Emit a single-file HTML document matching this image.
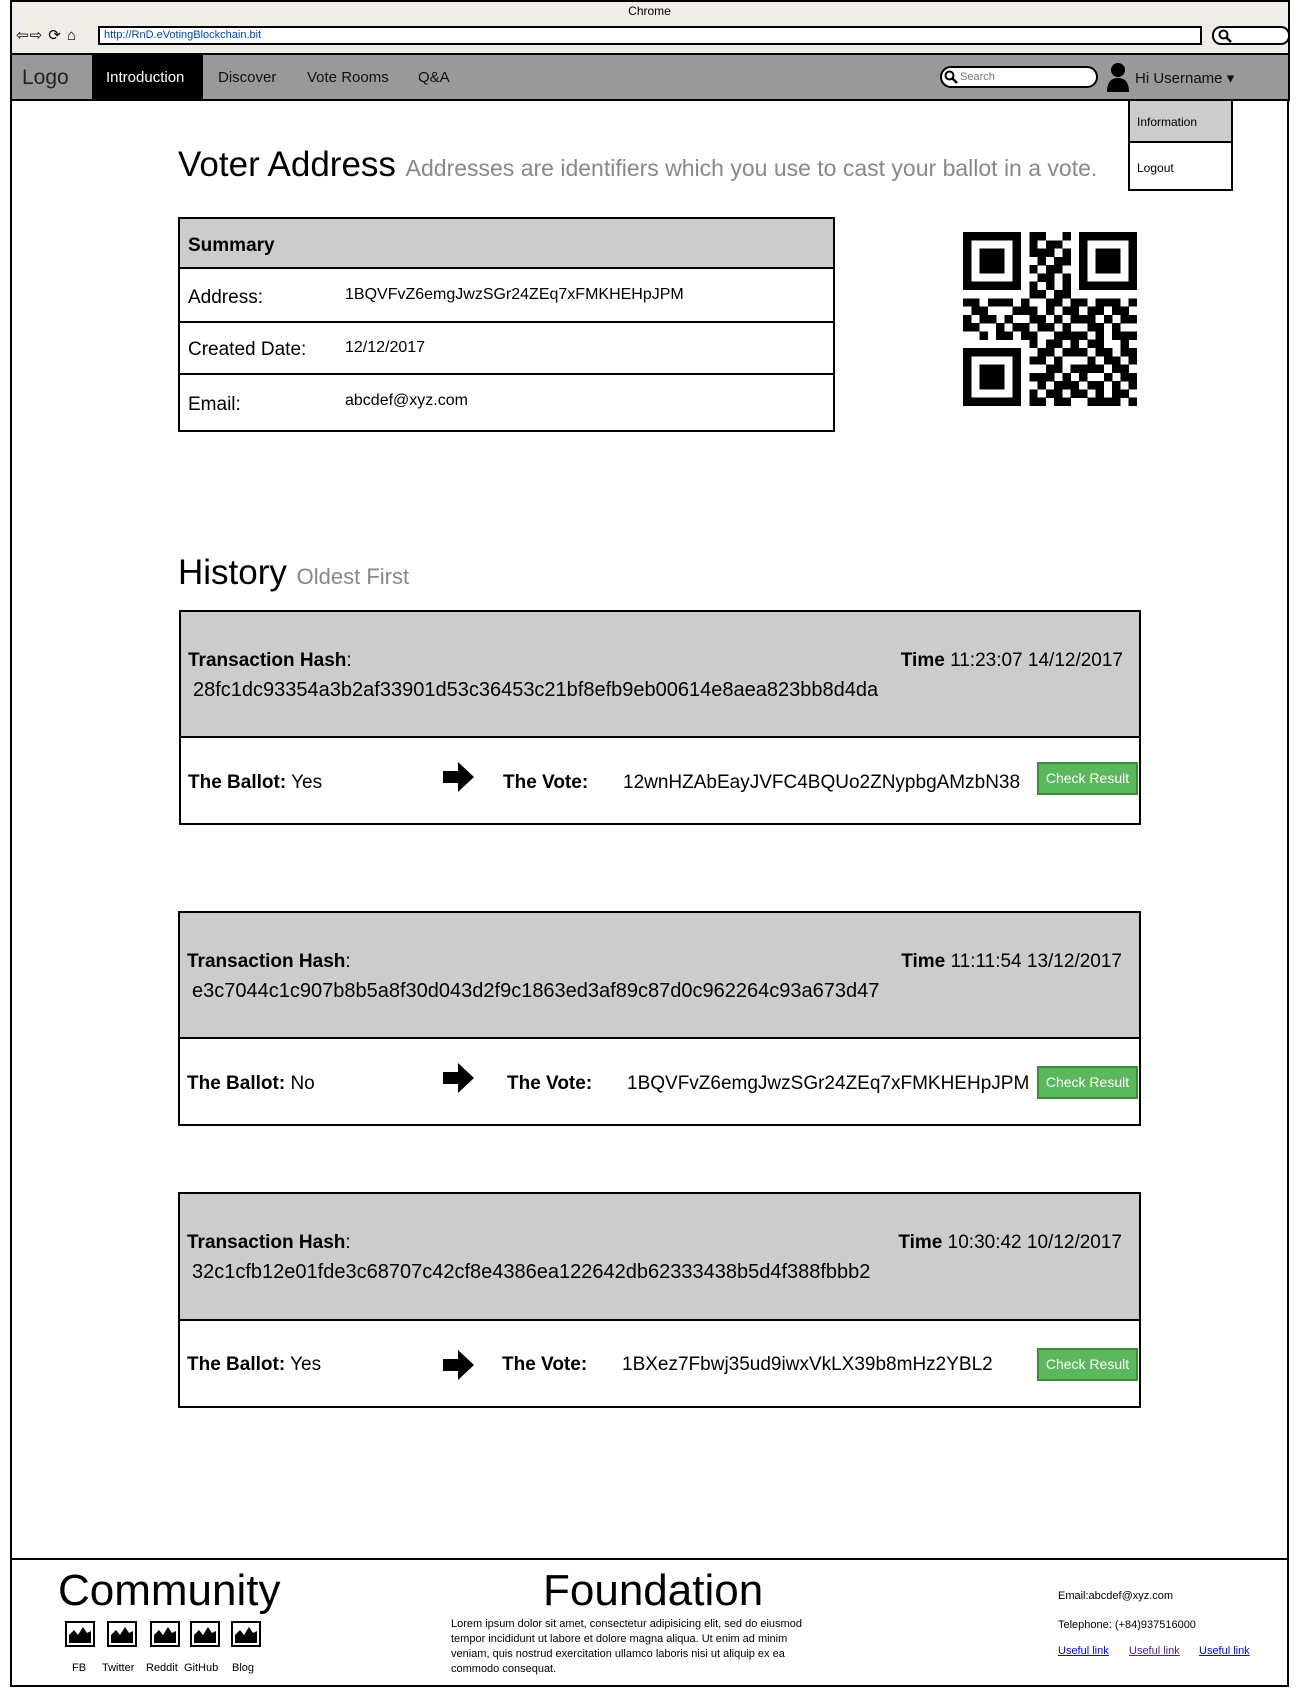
<!DOCTYPE html>
<html><head><meta charset="utf-8"><style>
*{margin:0;padding:0;box-sizing:border-box}
body{width:1299px;height:1697px;background:#fff;font-family:"Liberation Sans",sans-serif;color:#000;position:relative;overflow:hidden}
.a{position:absolute;white-space:nowrap}
.box{position:absolute;border:2px solid #000}
.g{background:#ccc}
.btn{position:absolute;width:101px;height:33px;background:#5cb85c;border:2px solid #3d8b3d;color:#fff;font-size:14px;text-align:center;line-height:29px}
.lbl{font-size:19px}
.hs{font-size:20px}
b{font-weight:bold}
</style></head><body>
<!-- browser chrome -->
<div class="a" style="left:10px;top:0;width:1280px;height:53px;background:#f0ede8;border:2px solid #000;border-bottom:none"></div>
<div class="a" style="left:0;top:4px;width:1299px;text-align:center;font-size:12px">Chrome</div>
<div class="a" style="left:16px;top:26px;font-size:15px;letter-spacing:1px">⇦⇨ ⟳ ⌂</div>
<div class="a" style="left:98px;top:26px;width:1104px;height:19px;background:#fff;border:2px solid #000;font-size:11px;line-height:15px;padding-left:4px;color:#0645ad">http://RnD.eVotingBlockchain.bit</div>
<div class="a" style="left:1212px;top:26px;width:78px;height:19px;background:#fff;border:2px solid #000;border-radius:9px"></div>
<svg class="a" style="left:1218px;top:29px" width="14" height="14"><circle cx="5.5" cy="5.5" r="4" fill="none" stroke="#000" stroke-width="2"/><line x1="8.5" y1="8.5" x2="13" y2="13" stroke="#000" stroke-width="2.5"/></svg>
<!-- nav -->
<div class="a" style="left:10px;top:53px;width:1280px;height:48px;background:#999;border:2px solid #000"></div>
<div class="a" style="left:92px;top:53px;width:111px;height:48px;background:#000"></div>
<div class="a" style="left:22px;top:66px;font-size:21px;color:#222">Logo</div>
<div class="a" style="left:106px;top:69px;font-size:15px;color:#fff">Introduction</div>
<div class="a" style="left:218px;top:69px;font-size:15px;color:#111">Discover</div>
<div class="a" style="left:307px;top:69px;font-size:15px;color:#111">Vote Rooms</div>
<div class="a" style="left:418px;top:69px;font-size:15px;color:#111">Q&amp;A</div>
<div class="a" style="left:940px;top:66px;width:158px;height:22px;background:#fff;border:2px solid #000;border-radius:11px;font-size:11px;line-height:18px;padding-left:18px;color:#777">Search</div>
<svg class="a" style="left:944px;top:70px" width="14" height="14"><circle cx="5.5" cy="5.5" r="4" fill="none" stroke="#000" stroke-width="2"/><line x1="8.5" y1="8.5" x2="13" y2="13" stroke="#000" stroke-width="2.5"/></svg>
<svg class="a" style="left:1106px;top:62px" width="24" height="30"><circle cx="12" cy="8" r="7" fill="#000"/><path d="M1 30 Q1 16 12 16 Q23 16 23 30Z" fill="#000"/></svg>
<div class="a" style="left:1135px;top:69px;font-size:15px;color:#111">Hi Username ▾</div>
<!-- dropdown -->
<div class="box" style="left:1128px;top:101px;width:105px;height:90px;background:#fff"></div>
<div class="a" style="left:1130px;top:101px;width:101px;height:42px;background:#ccc;border-bottom:2px solid #000"></div>
<div class="a" style="left:1137px;top:115px;font-size:12px">Information</div>
<div class="a" style="left:1137px;top:161px;font-size:12px">Logout</div>
<!-- page frame -->
<div class="a" style="left:10px;top:101px;width:2px;height:1586px;background:#000"></div>
<div class="a" style="left:1287px;top:101px;width:2px;height:1586px;background:#000"></div>
<!-- voter address -->
<div class="a" style="left:178px;top:145px;font-size:35px">Voter Address <span style="font-size:23px;color:#888">Addresses are identifiers which you use to cast your ballot in a vote.</span></div>
<div class="box" style="left:178px;top:217px;width:657px;height:215px"></div>
<div class="a g" style="left:180px;top:219px;width:653px;height:50px;border-bottom:2px solid #000"></div>
<div class="a" style="left:180px;top:321px;width:653px;height:2px;background:#000"></div>
<div class="a" style="left:180px;top:373px;width:653px;height:2px;background:#000"></div>
<div class="a" style="left:188px;top:235px;font-size:19px;font-weight:bold">Summary</div>
<div class="a" style="left:188px;top:287px;font-size:19px">Address:</div>
<div class="a" style="left:345px;top:286px;font-size:16px">1BQVFvZ6emgJwzSGr24ZEq7xFMKHEHpJPM</div>
<div class="a" style="left:188px;top:339px;font-size:19px">Created Date:</div>
<div class="a" style="left:345px;top:339px;font-size:16px">12/12/2017</div>
<div class="a" style="left:188px;top:394px;font-size:19px">Email:</div>
<div class="a" style="left:345px;top:392px;font-size:16px">abcdef@xyz.com</div>
<svg id="qr" class="a" style="left:963px;top:232px" width="174" height="174" viewBox="0 0 21 21" shape-rendering="crispEdges"></svg>
<!-- history -->
<div class="a" style="left:178px;top:553px;font-size:35px">History <span style="font-size:22px;color:#888">Oldest First</span></div>

<div class="box" style="left:179px;top:610px;width:962px;height:215px"></div>
<div class="a g" style="left:181px;top:612px;width:958px;height:126px;border-bottom:2px solid #000"></div>
<div class="a lbl" style="left:188px;top:650px"><b>Transaction Hash</b>:</div>
<div class="a hs" style="left:193px;top:679px">28fc1dc93354a3b2af33901d53c36453c21bf8efb9eb00614e8aea823bb8d4da</div>
<div class="a lbl" style="right:176px;top:650px"><b>Time</b> 11:23:07 14/12/2017</div>
<div class="a lbl" style="left:188px;top:772px"><b>The Ballot:</b> Yes</div>
<svg class="a" style="left:443px;top:762px" width="31" height="30"><path d="M0 9H15V0L31 15L15 30V21H0Z" fill="#000"/></svg>
<div class="a lbl" style="left:503px;top:772px"><b>The Vote:</b></div>
<div class="a lbl" style="left:623px;top:772px">12wnHZAbEayJVFC4BQUo2ZNypbgAMzbN38</div>
<div class="btn" style="left:1037px;top:762px">Check Result</div>

<div class="box" style="left:178px;top:911px;width:963px;height:215px"></div>
<div class="a g" style="left:180px;top:913px;width:959px;height:126px;border-bottom:2px solid #000"></div>
<div class="a lbl" style="left:187px;top:951px"><b>Transaction Hash</b>:</div>
<div class="a hs" style="left:192px;top:980px">e3c7044c1c907b8b5a8f30d043d2f9c1863ed3af89c87d0c962264c93a673d47</div>
<div class="a lbl" style="right:177px;top:951px"><b>Time</b> 11:11:54 13/12/2017</div>
<div class="a lbl" style="left:187px;top:1073px"><b>The Ballot:</b> No</div>
<svg class="a" style="left:443px;top:1063px" width="31" height="30"><path d="M0 9H15V0L31 15L15 30V21H0Z" fill="#000"/></svg>
<div class="a lbl" style="left:507px;top:1073px"><b>The Vote:</b></div>
<div class="a lbl" style="left:627px;top:1073px">1BQVFvZ6emgJwzSGr24ZEq7xFMKHEHpJPM</div>
<div class="btn" style="left:1037px;top:1066px">Check Result</div>

<div class="box" style="left:178px;top:1192px;width:963px;height:216px"></div>
<div class="a g" style="left:180px;top:1194px;width:959px;height:127px;border-bottom:2px solid #000"></div>
<div class="a lbl" style="left:187px;top:1232px"><b>Transaction Hash</b>:</div>
<div class="a hs" style="left:192px;top:1261px">32c1cfb12e01fde3c68707c42cf8e4386ea122642db62333438b5d4f388fbbb2</div>
<div class="a lbl" style="right:177px;top:1232px"><b>Time</b> 10:30:42 10/12/2017</div>
<div class="a lbl" style="left:187px;top:1354px"><b>The Ballot:</b> Yes</div>
<svg class="a" style="left:443px;top:1350px" width="31" height="30"><path d="M0 9H15V0L31 15L15 30V21H0Z" fill="#000"/></svg>
<div class="a lbl" style="left:502px;top:1354px"><b>The Vote:</b></div>
<div class="a lbl" style="left:622px;top:1354px">1BXez7Fbwj35ud9iwxVkLX39b8mHz2YBL2</div>
<div class="btn" style="left:1037px;top:1348px">Check Result</div>

<!-- footer -->
<div class="a" style="left:10px;top:1558px;width:1279px;height:2px;background:#000"></div>
<div class="a" style="left:10px;top:1685px;width:1279px;height:2px;background:#000"></div>
<div class="a" style="left:58px;top:1566px;font-size:44px">Community</div>
<div id="icons"></div>
<div class="a" style="left:72px;top:1662px;font-size:11px">FB</div>
<div class="a" style="left:102px;top:1662px;font-size:11px">Twitter</div>
<div class="a" style="left:146px;top:1662px;font-size:11px">Reddit</div>
<div class="a" style="left:184px;top:1662px;font-size:11px">GitHub</div>
<div class="a" style="left:232px;top:1662px;font-size:11px">Blog</div>
<div class="a" style="left:543px;top:1566px;font-size:44px">Foundation</div>
<div class="a" style="left:451px;top:1617px;font-size:11px;line-height:15px;white-space:normal;width:370px">Lorem ipsum dolor sit amet, consectetur adipisicing elit, sed do eiusmod tempor incididunt ut labore et dolore magna aliqua. Ut enim ad minim veniam, quis nostrud exercitation ullamco laboris nisi ut aliquip ex ea commodo consequat.</div>
<div class="a" style="left:1058px;top:1590px;font-size:11px">Email:abcdef@xyz.com</div>
<div class="a" style="left:1058px;top:1619px;font-size:11px">Telephone: (+84)937516000</div>
<div class="a" style="left:1058px;top:1645px;font-size:11px;color:#00f;text-decoration:underline">Useful link</div>
<div class="a" style="left:1129px;top:1645px;font-size:11px;color:#551a8b;text-decoration:underline">Useful link</div>
<div class="a" style="left:1199px;top:1645px;font-size:11px;color:#00f;text-decoration:underline">Useful link</div>
<script>
var rows=["111111101100101111111","100000101011001000001","101110101110101011101","101110100101101011101","101110101011001011101","100000100110101000001","111111101010101111111","000000001101100000000","110111010011011011101","011000111010110110110","101101001101011101011","110010110110100110100","001011011001111010111","000000001011010110010","111111100110111011011","100000101101000101101","101110100011011110110","101110101110101001011","101110100101110110101","100000101011011010110","111111101101100111101"];
var s="";for(var y=0;y<21;y++)for(var x=0;x<21;x++)if(rows[y][x]=="1")s+='<rect x="'+x+'" y="'+y+'" width="1.02" height="1.02"/>';
document.getElementById("qr").innerHTML=s;
var xs=[65,107,150,190,231],h="";
xs.forEach(function(x){h+='<svg class="a" style="left:'+x+'px;top:1621px" width="30" height="26"><rect x="1" y="1" width="28" height="24" fill="#fff" stroke="#000" stroke-width="2"/><path d="M4 22 L4 14 L9 9 L13 14 L18 6 L22 12 L26 10 L26 22Z" fill="#000"/></svg>';});
document.getElementById("icons").innerHTML=h;
</script>
</body></html>
